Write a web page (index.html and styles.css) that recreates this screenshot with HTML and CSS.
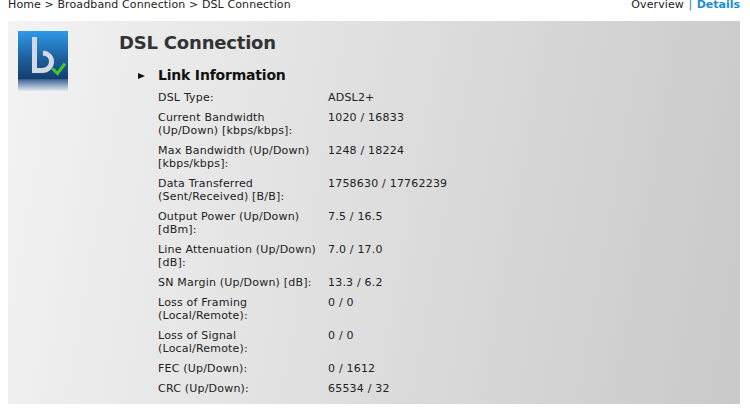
FILE: index.html
```html
<!DOCTYPE html>
<html lang="en">
<head>
    <meta charset="UTF-8">
    <meta name="viewport" content="width=device-width, initial-scale=1.0">
    <title>DSL Connection</title>
    <link rel="stylesheet" href="styles.css">
</head>
<body>
    <div class="topbar">
        <div class="crumbs">Home &gt; Broadband Connection &gt; DSL Connection</div>
        <div class="tabs"><span class="plain">Overview</span> <span class="sep">|</span> <a class="active">Details</a></div>
    </div>

    <div class="panel">
        <div class="logo">
            <svg width="50" height="60" viewBox="0 0 50 60">
                <defs>
                    <linearGradient id="tile" x1="0" y1="0" x2="0" y2="1">
                        <stop offset="0" stop-color="#2f9ae8"/>
                        <stop offset="0.45" stop-color="#1d609f"/>
                        <stop offset="0.8" stop-color="#123f6e"/>
                        <stop offset="0.81" stop-color="#3f6a96"/>
                        <stop offset="1" stop-color="#e4e9ef"/>
                    </linearGradient>
                </defs>
                <rect width="50" height="60" fill="url(#tile)"/>
                <path d="M16.500 6V39.500H24C30 39.500 33.500 35 33.500 30.500C33.500 26 30 22.500 25 22" fill="none" stroke="#d3d9e2" stroke-width="5"/>
                <path d="M34.500 37.500l5 5 7.500-10" fill="none" stroke="#46c52f" stroke-width="3"/>
            </svg>
        </div>
        <div class="content">
            <h1>DSL Connection</h1>
            <h2><span class="arrow"></span>Link Information</h2>
            <div class="info">
                <div>DSL Type:</div><div>ADSL2+</div>
                <div>Current Bandwidth (Up/Down) [kbps/kbps]:</div><div>1020 / 16833</div>
                <div>Max Bandwidth (Up/Down) [kbps/kbps]:</div><div>1248 / 18224</div>
                <div>Data Transferred (Sent/Received) [B/B]:</div><div>1758630 / 17762239</div>
                <div>Output Power (Up/Down) [dBm]:</div><div>7.5 / 16.5</div>
                <div>Line Attenuation (Up/Down) [dB]:</div><div>7.0 / 17.0</div>
                <div>SN Margin (Up/Down) [dB]:</div><div>13.3 / 6.2</div>
                <div>Loss of Framing (Local/Remote):</div><div>0 / 0</div>
                <div>Loss of Signal (Local/Remote):</div><div>0 / 0</div>
                <div>FEC (Up/Down):</div><div>0 / 1612</div>
                <div>CRC (Up/Down):</div><div>65534 / 32</div>
            </div>
        </div>
    </div>
</body>
</html>
```

FILE: styles.css
```css
body {
    font-family: "DejaVu Sans", Verdana, sans-serif;
    font-size: 11px;
    line-height: 13px;
    color: #222;
    background-color: #fff;
    margin: 0;
    height: 408px;
    overflow: hidden;
}

.topbar {
    display: flex;
    justify-content: space-between;
    height: 21px;
    line-height: 9px;
    margin: 0 10px 0 8px;
}

.crumbs {
    letter-spacing: 0.11px;
}

.plain {
    letter-spacing: 0.1px;
}

.sep {
    margin: 0 1px;
    color: #1a7fb8;
}

.active {
    font-weight: bold;
    color: #1a8fd0;
}

.panel {
    display: flex;
    margin: 0 10px 0 8px;
    height: 383px;
    background: linear-gradient(100deg, #f3f3f3, #c9c9c9);
}

.logo {
    width: 50px;
    padding: 10px 0 0 10px;
}

.content {
    margin-left: 51px;
    padding-top: 11px;
}

h1 {
    font-size: 18px;
    line-height: 22px;
    letter-spacing: -0.2px;
    color: #333;
    margin: 0;
}

h2 {
    display: flex;
    align-items: center;
    font-size: 14px;
    line-height: 17px;
    letter-spacing: -0.2px;
    color: #111;
    margin: 13px 0 0 19px;
}

.arrow {
    width: 0;
    height: 0;
    margin-right: 13px;
    border-left: 7px solid #111;
    border-top: 3.5px solid transparent;
    border-bottom: 3.5px solid transparent;
}

.info {
    display: grid;
    grid-template-columns: 170px auto;
    row-gap: 7px;
    letter-spacing: 0.2px;
    margin: 7px 0 0 39px;
}

.info div:nth-child(odd) {
    padding-right: 5px;
}
```
